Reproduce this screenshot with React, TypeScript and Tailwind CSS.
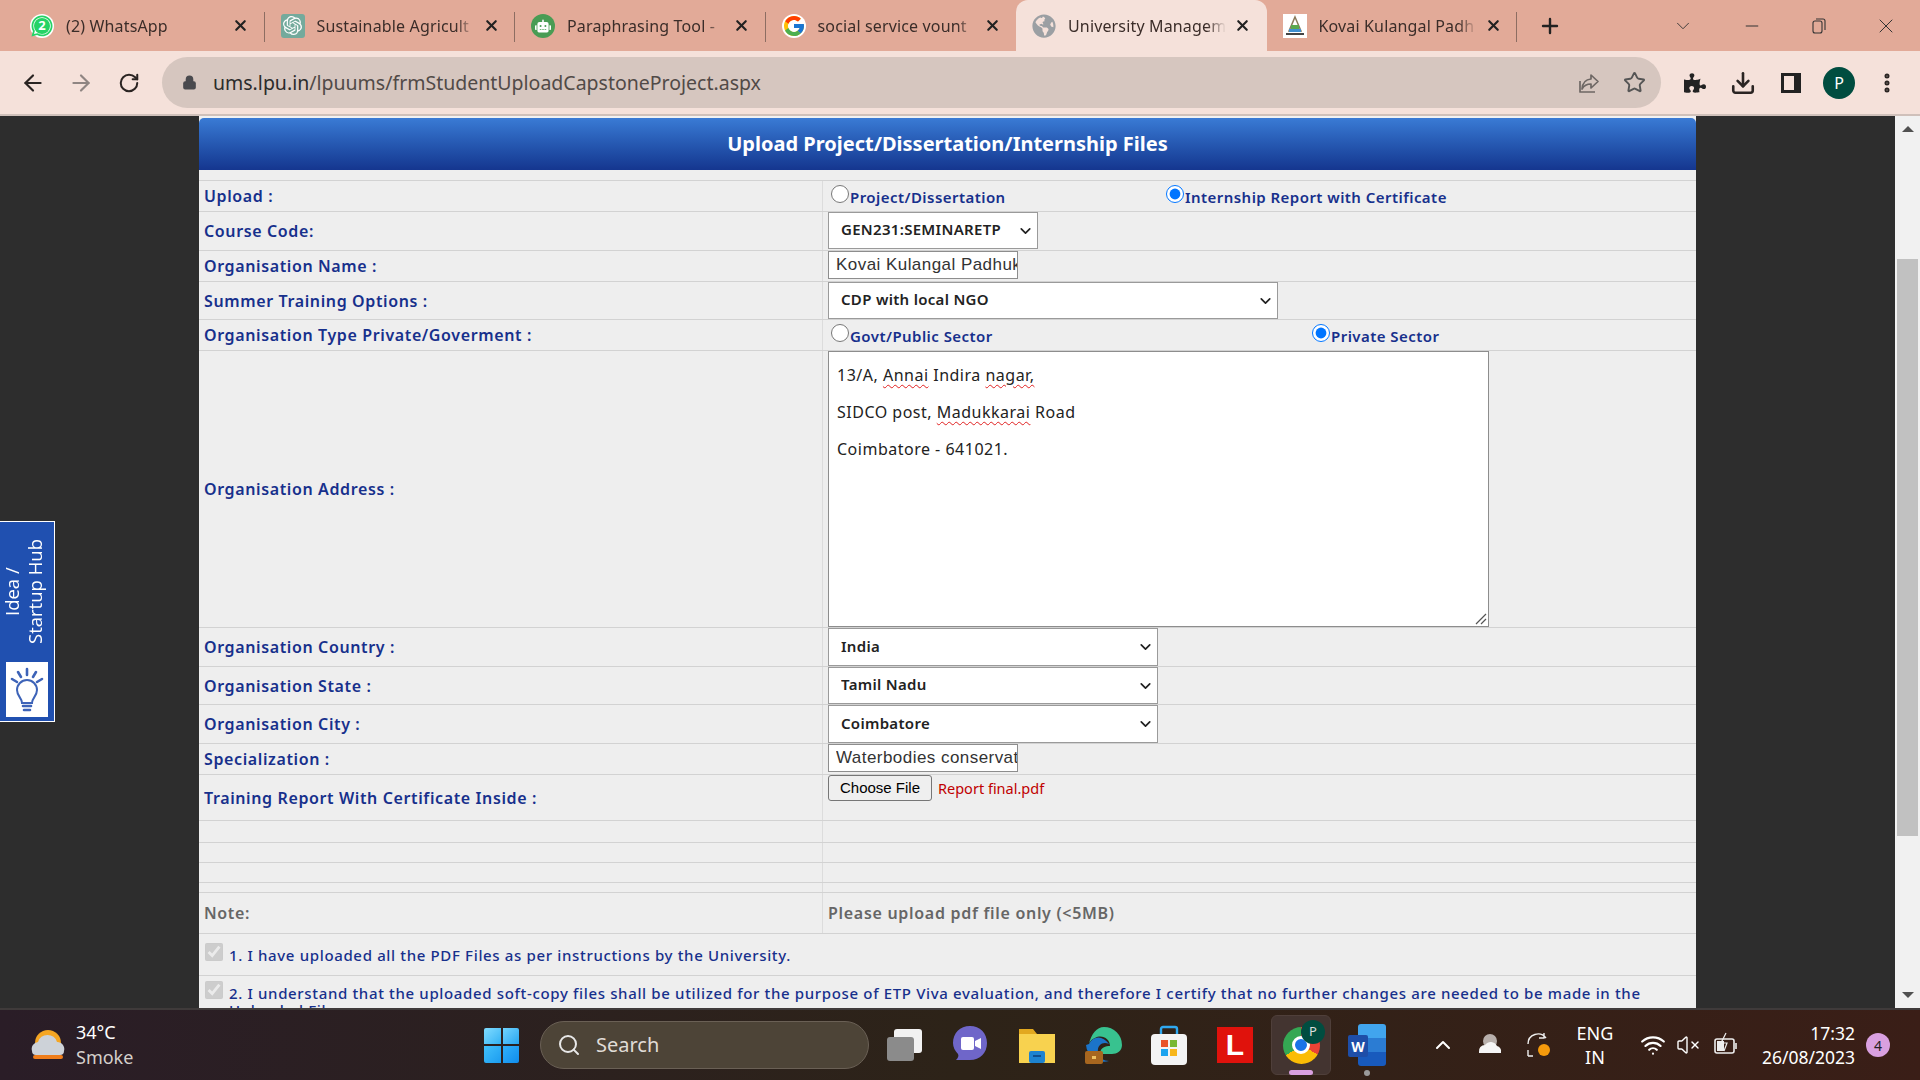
import type { ReactNode } from "react";
import { ArrowLeft, ArrowRight, ChevronDown, ChevronUp, Download, Lock, MoreVertical, Plus, RotateCw, Search, Star, Wifi, X, Minus, VolumeX } from "lucide-react";
import { FcGoogle } from "react-icons/fc";
import { SiOpenai } from "react-icons/si";
import { FaGlobeAmericas, FaPuzzlePiece, FaWhatsapp, FaRobot } from "react-icons/fa";

const labelFont = "font-['Noto_Sans',sans-serif]";

function KovaiLogo() {
  return (
    <svg width="24" height="24" viewBox="0 0 24 24">
      <rect width="24" height="24" fill="#fff" />
      <path d="M12 3 L18 17 H6 Z" fill="none" stroke="#8a7a5a" strokeWidth="1.5" />
      <rect x="8" y="11" width="8" height="4" fill="#5aa84e" />
      <rect x="6" y="15" width="12" height="3" fill="#3f8fd0" />
      <rect x="3" y="19" width="18" height="2" fill="#444" />
    </svg>
  );
}

const tabs: { title: string; icon: ReactNode; active?: boolean; sep?: boolean }[] = [
  {
    title: "(2) WhatsApp",
    sep: true,
    icon: (
      <span className="relative flex h-6 w-6 items-center justify-center rounded-full bg-white">
        <FaWhatsapp className="absolute h-6 w-6 text-[#25d366]" />
        <span className="relative flex h-4 w-4 items-center justify-center rounded-full bg-[#25d366] text-[13px] font-bold leading-none text-white">2</span>
      </span>
    ),
  },
  {
    title: "Sustainable Agricult",
    sep: true,
    icon: (
      <span className="flex h-6 w-6 items-center justify-center rounded-[3px] bg-[#74aa9c]">
        <SiOpenai className="h-[19px] w-[19px] text-white" />
      </span>
    ),
  },
  {
    title: "Paraphrasing Tool -",
    sep: true,
    icon: (
      <span className="flex h-6 w-6 items-center justify-center rounded-full bg-[#499c54]">
        <FaRobot className="h-4 w-4 text-white" />
      </span>
    ),
  },
  { title: "social service vount", icon: <FcGoogle className="h-6 w-6 rounded-full bg-white" /> },
  { title: "University Managem", active: true, icon: <FaGlobeAmericas className="h-6 w-6 text-[#9b9fa3]" /> },
  { title: "Kovai Kulangal Padh", sep: true, icon: <KovaiLogo /> },
];

function TabStrip() {
  return (
    <div className="flex h-[51px] items-stretch bg-[#e2aa98] pl-[14px]">
      {tabs.map((t) => (
        <div
          key={t.title}
          className={`relative flex w-[250.5px] items-center pl-[16px] ${t.active ? "rounded-t-[12px] bg-[#f5e1da]" : ""}`}
        >
          <span className="flex w-[24px] shrink-0 items-center justify-center">{t.icon}</span>
          <span className="ml-[12px] w-[158px] overflow-hidden whitespace-nowrap text-[16px] tracking-[0.15px] text-[#3b2d29] [mask-image:linear-gradient(to_right,black_88%,transparent)]">{t.title}</span>
          <X className="ml-[8px] h-[17px] w-[17px] shrink-0 text-[#222]" strokeWidth={3} />
          {t.sep && <span className="absolute right-0 top-[12px] h-[30px] w-px bg-[#8d6d62]" />}
        </div>
      ))}
      <div className="ml-[21px] flex items-center">
        <Plus className="h-[24px] w-[24px] text-[#222]" strokeWidth={2.4} />
      </div>
      <div className="ml-auto flex items-center text-[#333]">
        <ChevronDown className="mr-[48px] h-[22px] w-[22px]" strokeWidth={1} />
        <Minus className="mr-[48px] h-[20px] w-[20px]" strokeWidth={1.2} />
        <svg className="mr-[46px]" width="18" height="18" viewBox="0 0 18 18" fill="none" stroke="#333" strokeWidth="1.1">
          <rect x="3" y="4" width="9" height="12" rx="2" />
          <path d="M6 2h7a2 2 0 0 1 2 2v9" />
        </svg>
        <X className="mr-[22px] h-[24px] w-[24px]" strokeWidth={1} />
      </div>
    </div>
  );
}

function ShareIcon() {
  return (
    <svg className="ml-auto" width="24" height="24" viewBox="0 0 24 24" fill="none" stroke="#6e6764" strokeWidth="1.7" strokeLinejoin="round">
      <path d="M14 4l7 6.5-7 6.5v-4c-4.5 0-7 1.5-9 5 .5-5.5 3-9.5 9-10z" />
      <path d="M3 10v11h15" />
    </svg>
  );
}

function Toolbar() {
  return (
    <div className="flex h-[65px] items-center border-b-2 border-[#cfc0ba] bg-[#f5e1da] text-[#2a2422]">
      <div className="flex w-[162px] items-center pl-[20px]">
        <ArrowLeft className="h-[26px] w-[26px]" strokeWidth={2} />
        <ArrowRight className="ml-[22px] h-[26px] w-[26px] text-[#8f8582]" strokeWidth={2} />
        <RotateCw className="ml-[24px] h-[22px] w-[22px]" strokeWidth={2.2} />
      </div>
      <div className="flex h-[51px] w-[1499px] items-center rounded-full bg-[#d6c6bf]">
        <Lock className="ml-[20px] h-[15px] w-[15px] fill-[#4a4a4e] text-[#4a4a4e]" strokeWidth={2.2} />
        <span className="ml-[16px] text-[19.5px] leading-none text-[#2b2b2b]">
          ums.lpu.in<span className="text-[#514a47]">/lpuums/frmStudentUploadCapstoneProject.aspx</span>
        </span>
        <ShareIcon />
        <Star className="ml-[22px] mr-[15px] h-[23px] w-[23px] text-[#555]" strokeWidth={2} />
      </div>
      <FaPuzzlePiece className="ml-[23px] h-[22px] w-[22px] text-[#222]" />
      <Download className="ml-[24px] h-[26px] w-[26px]" strokeWidth={2.4} />
      <span className="ml-[25px] h-[20px] w-[20px] border-[3px] border-r-[7px] border-[#222]" />
      <span className="ml-[22px] flex h-[32px] w-[32px] items-center justify-center rounded-full bg-[#004d40] text-[16px] text-white">P</span>
      <MoreVertical className="ml-[20px] h-[24px] w-[24px]" strokeWidth={3} />
    </div>
  );
}

function Row({ h, label, note, children }: { h: string; label?: string; note?: boolean; children?: ReactNode }) {
  return (
    <div className={`flex ${h} items-stretch border-b border-[#d2d2d2]`}>
      <div className={`flex w-[624px] shrink-0 items-center border-r border-[#dcdcdc] pl-[5px] text-[16px] font-semibold tracking-[0.62px] ${note ? "text-[#666]" : "text-[#17308c]"}`}>
        {label}
      </div>
      <div className="min-w-0 flex-1 pl-[5px]">{children}</div>
    </div>
  );
}

function SelectBox({ value, w, h }: { value: string; w: string; h: string }) {
  return (
    <div className={`relative ${w} ${h}`}>
      <select
        defaultValue={value}
        className={`h-full w-full appearance-none border border-[#9a9a9a] bg-white pb-[2px] pl-[12px] text-[15px] font-semibold tracking-[0.3px] text-[#222] ${labelFont}`}
      >
        <option>{value}</option>
      </select>
      <ChevronDown className="pointer-events-none absolute right-[4px] top-1/2 h-[17px] w-[17px] -translate-y-1/2 text-[#222]" strokeWidth={2.4} />
    </div>
  );
}

function TextBox({ value }: { value: string }) {
  return (
    <input
      readOnly
      value={value}
      className="block h-[28px] w-[190px] border border-[#8d8d8d] bg-white pl-[7px] font-['Liberation_Sans',sans-serif] text-[17px] font-normal tracking-[0.45px] text-[#333]"
    />
  );
}

function Radio({ label, on, left }: { label: string; on?: boolean; left: string }) {
  return (
    <label className={`flex items-start ${left}`}>
      <input type="radio" readOnly checked={!!on} className="mt-[4px] h-[18px] w-[18px] accent-[#0075ff]" />
      <span className="mt-[6px] ml-[1px] text-[15px] leading-[20px] tracking-[0.45px]">{label}</span>
    </label>
  );
}

function Squiggle({ children }: { children: string }) {
  return <span className="underline decoration-[#e02020] decoration-wavy decoration-1 underline-offset-[3px]">{children}</span>;
}

function AddressBox() {
  return (
    <div className="relative h-[276px] w-[661px] border border-[#8d8d8d] bg-white pl-[8px] pt-[5px] text-[16px] font-normal leading-[37px] tracking-[0.5px] text-[#222]">
      <div>13/A, <Squiggle>Annai</Squiggle> Indira <Squiggle>nagar,</Squiggle></div>
      <div>SIDCO post, <Squiggle>Madukkarai</Squiggle> Road</div>
      <div>Coimbatore - 641021.</div>
      {/* resize handle */}
      <svg className="absolute bottom-[1px] right-[1px]" width="13" height="13" viewBox="0 0 13 13" stroke="#555" strokeWidth="1.2">
        <path d="M2 12 12 2M7 12l5-5" />
      </svg>
    </div>
  );
}

function FormPanel() {
  return (
    <div className={`h-full overflow-hidden border-t-2 border-[#f1f1f1] bg-[#eeeeee] text-[15px] ${labelFont}`}>
      <div className="flex h-[52px] items-center justify-center rounded-t-[5px] bg-gradient-to-b from-[#3a7bd5] to-[#15368f] text-[20px] font-bold text-white">
        Upload Project/Dissertation/Internship Files
      </div>
      <div className="h-[11px] border-b border-[#d2d2d2]" />
      <Row h="h-[31px]" label="Upload :">
        <div className="flex h-full font-semibold text-[#17308c]">
          <Radio label="Project/Dissertation" left="ml-[3px] w-[335px]" />
          <Radio label="Internship Report with Certificate" on left="" />
        </div>
      </Row>
      <Row h="h-[39px]" label="Course Code:">
        <SelectBox value="GEN231:SEMINARETP" w="w-[210px]" h="h-[37px]" />
      </Row>
      <Row h="h-[31px]" label="Organisation Name :">
        <TextBox value="Kovai Kulangal Padhukappu" />
      </Row>
      <Row h="h-[38px]" label="Summer Training Options :">
        <SelectBox value="CDP with local NGO" w="w-[450px]" h="h-[37px]" />
      </Row>
      <Row h="h-[31px]" label="Organisation Type Private/Goverment :">
        <div className="flex h-full font-semibold text-[#17308c]">
          <Radio label="Govt/Public Sector" left="ml-[3px] w-[481px]" />
          <Radio label="Private Sector" on left="" />
        </div>
      </Row>
      <Row h="h-[277px]" label="Organisation Address :">
        <AddressBox />
      </Row>
      <Row h="h-[39px]" label="Organisation Country :">
        <SelectBox value="India" w="w-[330px]" h="h-[38px]" />
      </Row>
      <Row h="h-[38px]" label="Organisation State :">
        <SelectBox value="Tamil Nadu" w="w-[330px]" h="h-[37px]" />
      </Row>
      <Row h="h-[39px]" label="Organisation City :">
        <SelectBox value="Coimbatore" w="w-[330px]" h="h-[38px]" />
      </Row>
      <Row h="h-[31px]" label="Specialization :">
        <TextBox value="Waterbodies conservation" />
      </Row>
      <Row h="h-[46px]" label="Training Report With Certificate Inside :">
        <div className="flex items-start">
          <button className="h-[26px] w-[104px] rounded-[3px] border border-[#767676] bg-[#efefef] font-['Liberation_Sans',sans-serif] text-[15px] text-black">
            Choose File
          </button>
          <span className="ml-[6px] mt-[3px] text-[14.5px] text-[#c00000]">Report final.pdf</span>
        </div>
      </Row>
      <Row h="h-[22px]" />
      <Row h="h-[20px]" />
      <Row h="h-[20px]" />
      <Row h="h-[10px]" />
      <Row h="h-[41px]" label="Note:" note>
        <div className="flex h-full items-center text-[16px] font-semibold tracking-[0.7px] text-[#666]">Please upload pdf file only (&lt;5MB)</div>
      </Row>
      <div className="flex h-[42px] border-b border-[#d2d2d2] pl-[6px] pt-[9px] font-medium tracking-[0.65px] text-[#17308c]">
        <input type="checkbox" checked disabled readOnly className="h-[18px] w-[18px]" />
        <span className="ml-[6px] mt-[1px]">1. I have uploaded all the PDF Files as per instructions by the University.</span>
      </div>
      <div className="flex pl-[6px] pt-[5px] font-medium leading-[17px] tracking-[0.65px] text-[#17308c]">
        <input type="checkbox" checked disabled readOnly className="h-[18px] w-[18px] shrink-0" />
        <span className="ml-[6px] mt-[4px] pr-[40px]">
          2. I understand that the uploaded soft-copy files shall be utilized for the purpose of ETP Viva evaluation, and therefore I certify that no further changes are needed to be made in the Uploaded Files
        </span>
      </div>
    </div>
  );
}

function Scrollbar() {
  return (
    <div className="flex w-[25px] shrink-0 flex-col items-center bg-[#f1f1f1] py-[10px]">
      <span className="h-0 w-0 border-x-[6px] border-b-[6px] border-x-transparent border-b-[#505050]" />
      <span className="mt-[127px] h-[577px] w-[21px] bg-[#c1c1c1]" />
      <span className="mt-auto h-0 w-0 border-x-[6px] border-t-[6px] border-x-transparent border-t-[#505050]" />
    </div>
  );
}

function IdeaHub() {
  return (
    <div className="absolute left-0 top-[405px] flex h-[201px] w-[55px] flex-col items-center border border-l-0 border-white bg-[#2050b0] pr-[8px] text-white">
      <div className="flex h-[140px] items-center justify-center [writing-mode:vertical-rl] rotate-180 font-['Open_Sans',sans-serif] text-[18.5px] leading-[23px]">
        <span className="text-center">Idea /<br />Startup Hub</span>
      </div>
      <div className="ml-[8px] flex h-[55px] w-[42px] items-center justify-center bg-white">
        <svg width="34" height="46" viewBox="0 0 34 46" fill="none" stroke="#3d63b8" strokeWidth="2" strokeLinecap="round">
          <path d="M2 12l5 3M8 5l3 5M17 2v6M26 5l-3 5M32 12l-5 3" strokeWidth="2.6" />
          <path d="M12 36c0-5-5-7-5-13a10 10 0 0 1 20 0c0 6-5 8-5 13z" />
          <path d="M13 39h8M14 43h6" strokeWidth="2.6" />
        </svg>
      </div>
    </div>
  );
}

function WinLogo() {
  return (
    <div className="grid h-[35px] w-[35px] grid-cols-2 gap-[2px]">
      <span className="rounded-tl-[2px] bg-gradient-to-br from-[#7fdcff] to-[#2fb2f4]" />
      <span className="rounded-tr-[2px] bg-gradient-to-br from-[#6fd4ff] to-[#22a5f0]" />
      <span className="rounded-bl-[2px] bg-gradient-to-br from-[#40c0fb] to-[#1a9cf0]" />
      <span className="rounded-br-[2px] bg-gradient-to-br from-[#2fb0fa] to-[#0f8cec]" />
    </div>
  );
}

const appIcons: { id: string; pad: string; node: ReactNode }[] = [
  {
    id: "taskview",
    pad: "ml-[18px]",
    node: (
      <svg width="36" height="34" viewBox="0 0 36 34">
        <rect x="7" y="1" width="28" height="24" rx="3" fill="#f2f2f2" />
        <rect x="0" y="9" width="27" height="24" rx="3" fill="#8b8b8b" />
      </svg>
    ),
  },
  {
    id: "teams",
    pad: "ml-[29px]",
    node: (
      <svg width="36" height="38" viewBox="0 0 36 38">
        <path d="M18 0c10 0 17 7 17 17s-7 17-17 17H4c2-2 3-4 2-6-3-3-5-7-5-11C1 7 8 0 18 0z" fill="#6f66c9" />
        <rect x="9" y="11" width="13" height="13" rx="2" fill="#fff" />
        <path d="M23 15l6-3v11l-6-3z" fill="#fff" />
      </svg>
    ),
  },
  {
    id: "files",
    pad: "ml-[31px]",
    node: (
      <svg width="36" height="36" viewBox="0 0 36 36">
        <path d="M0 2h14l4 5h18v29H0z" fill="#e2a81f" />
        <rect y="7" width="36" height="29" fill="#f8d24f" />
        <rect x="10" y="24" width="16" height="12" rx="2" fill="#1d83d0" />
        <rect x="14" y="28" width="8" height="2" fill="#0f4f8f" />
      </svg>
    ),
  },
  {
    id: "edge",
    pad: "ml-[30px]",
    node: (
      <svg width="38" height="38" viewBox="0 0 38 38">
        <path d="M19 1a18 18 0 0 1 18 18c0 6-5 9-10 9H15c0-7 6-8 10-8 0-7-8-12-15-8a9 9 0 0 0-6 6C6 8 12 1 19 1z" fill="#38c28f" />
        <path d="M4 18c5-9 14-8 20 0-7-3-12 2-11 8 1 6 6 9 11 9A18 18 0 0 1 1 19z" fill="#1b74c9" />
        <rect x="0" y="25" width="18" height="13" rx="2" fill="#a7661f" />
        <rect x="7" y="30" width="4" height="3" fill="#f0c060" />
      </svg>
    ),
  },
  {
    id: "store",
    pad: "ml-[28px]",
    node: (
      <svg width="36" height="40" viewBox="0 0 36 40">
        <path d="M10 9V4a2 2 0 0 1 2-2h12a2 2 0 0 1 2 2v5" fill="none" stroke="#2fa8f0" strokeWidth="2.4" />
        <rect y="9" width="36" height="31" rx="4" fill="#f4f4f4" />
        <rect x="10" y="15" width="7" height="7" fill="#e9542b" />
        <rect x="19" y="15" width="7" height="7" fill="#78b833" />
        <rect x="10" y="24" width="7" height="7" fill="#1da4ef" />
        <rect x="19" y="24" width="7" height="7" fill="#f7b61b" />
      </svg>
    ),
  },
  {
    id: "l",
    pad: "ml-[30px]",
    node: (
      <span className="flex h-[36px] w-[36px] items-center justify-center bg-[#e0120c] font-['Liberation_Sans',sans-serif] text-[30px] font-bold leading-none text-white">L</span>
    ),
  },
];

function ChromeIcon() {
  return (
    <div className="relative flex h-[60px] w-[60px] items-center justify-center rounded-[6px] border border-[#4f3f3a] bg-[#433430]">
      <span className="relative flex h-[37px] w-[37px] items-center justify-center rounded-full bg-[conic-gradient(#ea4335_0_33%,#fbbc05_33%_66%,#34a853_66%_100%)]">
        <span className="h-[18px] w-[18px] rounded-full border-[3px] border-white bg-[#1a73e8]" />
      </span>
      <span className="absolute right-[5px] top-[4px] flex h-[24px] w-[24px] items-center justify-center rounded-full bg-[#004d40] text-[13px] text-[#ddd]">P</span>
      <span className="absolute bottom-[-1px] h-[5px] w-[24px] rounded-full bg-[#d9a0e0]" />
    </div>
  );
}

function TrayIcons() {
  return (
    <div className="ml-auto flex items-center text-white">
      <ChevronUp className="h-[24px] w-[24px]" strokeWidth={2} />
      <svg className="ml-[22px]" width="26" height="26" viewBox="0 0 26 26">
        <circle cx="13" cy="9" r="7" fill="#b8b0ac" />
        <path d="M2 20a6 6 0 0 1 6-7 7 7 0 0 1 12 1 5 5 0 0 1 4 6v1H2z" fill="#f5f5f5" />
      </svg>
      <svg className="ml-[22px]" width="26" height="30" viewBox="0 0 26 30" fill="none" stroke="#eee" strokeWidth="1.4">
        <path d="M3 14a10 10 0 0 1 18-6M19 3v5h-5M3 20v6M3 26h5" />
        <circle cx="19" cy="20" r="6" fill="#f59a0c" stroke="none" />
      </svg>
      <div className="ml-[22px] w-[44px] text-center text-[18px] leading-[24px]">ENG<br />IN</div>
      <Wifi className="ml-[23px] h-[26px] w-[26px]" strokeWidth={2} />
      <VolumeX className="ml-[10px] h-[24px] w-[24px]" strokeWidth={1.4} />
      <svg className="ml-[12px]" width="26" height="26" viewBox="0 0 26 26" fill="none" stroke="#eee" strokeWidth="1.6">
        <rect x="3" y="7" width="19" height="14" rx="2" />
        <path d="M24 11v6" />
        <rect x="5" y="9" width="7" height="10" fill="#eee" stroke="none" />
        <path d="M14 1l-5 10h6l-3 8" strokeWidth="1.2" />
      </svg>
      <div className="ml-[17px] w-[100px] text-right text-[17.5px] leading-[24px]">17:32<br />26/08/2023</div>
      <span className="ml-[11px] mr-[30px] flex h-[24px] w-[24px] items-center justify-center rounded-full bg-[#d9a0e0] text-[14px] text-[#222]">4</span>
    </div>
  );
}

function Taskbar() {
  return (
    <div className="flex h-[72px] items-center border-t-2 border-[#3f3a3a] bg-gradient-to-r from-[#2a1d27] via-[#2d2318] to-[#3a1e17] text-white">
      <div className="ml-[30px] flex w-[454px] items-center">
        <svg width="36" height="32" viewBox="0 0 36 32">
          <circle cx="18" cy="14" r="13" fill="#f5a623" />
          <rect x="3" y="26" width="30" height="4" rx="2" fill="#ef7d1a" />
          <path d="M2 22a7 7 0 0 1 6-9 10 10 0 0 1 19 0 7 7 0 0 1 7 9 4 4 0 0 1-4 4H6a4 4 0 0 1-4-4z" fill="#cdd2d8" />
        </svg>
        <div className="ml-[10px] text-[18px] leading-[25px]">
          <div>34°C</div>
          <div className="text-[#d5d0cc]">Smoke</div>
        </div>
      </div>
      <WinLogo />
      <div className="ml-[21px] flex h-[48px] w-[329px] items-center rounded-full border border-[#6a6055] bg-[#4d4437]">
        <Search className="ml-[16px] h-[24px] w-[24px] text-[#e8e8e8]" strokeWidth={2} />
        <span className="ml-[15px] text-[20px] text-[#e0dcd6]">Search</span>
      </div>
      {appIcons.map((a) => (
        <span key={a.id} className={`${a.pad} flex items-center`}>{a.node}</span>
      ))}
      <span className="ml-[18px]"><ChromeIcon /></span>
      <span className="relative ml-[17px] flex h-[42px] w-[38px] items-center justify-end">
        <span className="grid h-[42px] w-[28px] grid-rows-3 overflow-hidden rounded-[3px]">
          <span className="bg-[#41a5ee]" />
          <span className="bg-[#2b7cd3]" />
          <span className="bg-[#185abd]" />
        </span>
        <span className="absolute left-0 top-[11px] flex h-[22px] w-[20px] items-center justify-center rounded-[2px] bg-[#1e4ea8] text-[14px] font-bold text-white">W</span>
        <span className="absolute bottom-[-10px] left-[16px] h-[6px] w-[6px] rounded-full bg-[#9a9a9a]" />
      </span>
      <TrayIcons />
    </div>
  );
}

export default function App() {
  return (
    <div className="flex h-[1080px] w-[1920px] flex-col overflow-hidden bg-[#2d2d2d] font-['Noto_Sans',sans-serif]">
      <TabStrip />
      <Toolbar />
      <div className="relative flex h-[892px] min-h-0 flex-1">
        <div className="min-w-0 flex-1 pl-[199px] pr-[199px]">
          <FormPanel />
        </div>
        <Scrollbar />
        <IdeaHub />
      </div>
      <Taskbar />
    </div>
  );
}
